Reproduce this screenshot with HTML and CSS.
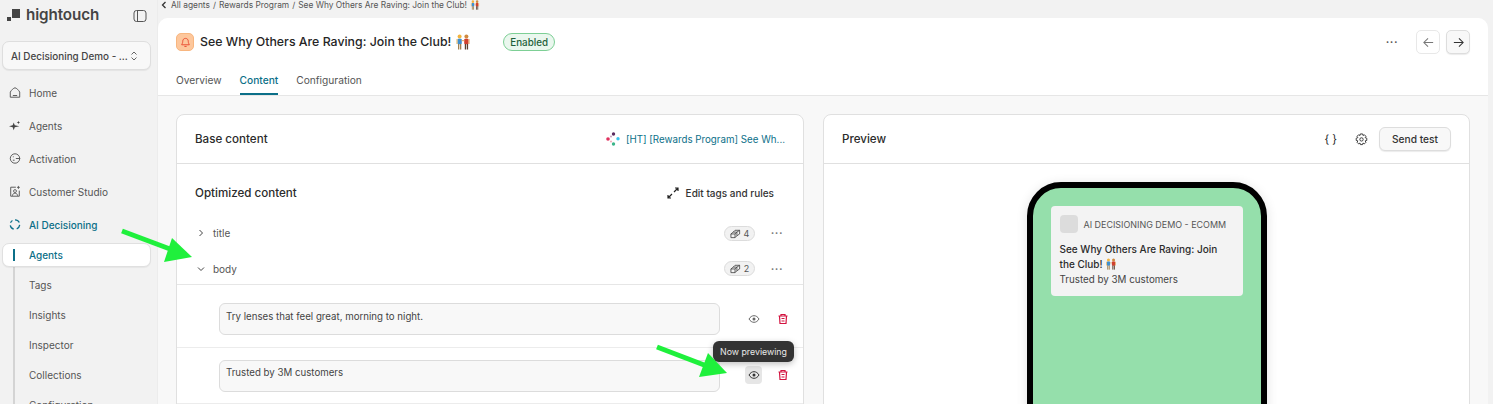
FILE: index.html
```html
<!DOCTYPE html>
<html lang="en">
<head>
<meta charset="utf-8">
<title>Hightouch</title>
<link rel="stylesheet" href="styles.css">
</head>
<body>
<svg class="defs" width="0" height="0" aria-hidden="true">
  <symbol id="couple" viewBox="0 0 16 16">
    <circle cx="4.600" cy="2.600" r="2" fill="#f2b33d"/>
    <rect x="2.400" y="4.800" width="4.400" height="5.400" rx="1" fill="#3f8fd0"/>
    <rect x="1.400" y="5" width="1.100" height="5" fill="#f0c070"/>
    <rect x="3" y="10" width="1.300" height="5.500" fill="#a08050"/>
    <rect x="5" y="10" width="1.300" height="5.500" fill="#a08050"/>
    <circle cx="11.400" cy="2.600" r="2" fill="#d08a3e"/>
    <rect x="9.200" y="4.800" width="4.400" height="5.400" rx="1" fill="#d0402e"/>
    <rect x="13.500" y="5" width="1.100" height="5" fill="#e8b070"/>
    <rect x="9.800" y="10" width="1.300" height="5.500" fill="#5b4030"/>
    <rect x="11.800" y="10" width="1.300" height="5.500" fill="#5b4030"/>
    <rect x="6.800" y="6" width="2.400" height="1.200" fill="#e8b070"/>
  </symbol>
  <symbol id="eye" viewBox="0 0 12 12">
    <path d="M1 6c1.300-2.200 3-3.300 5-3.300S9.700 3.800 11 6c-1.300 2.200-3 3.300-5 3.300S2.300 8.200 1 6z" fill="none" stroke="currentColor"/>
    <circle cx="6" cy="6" r="1.500" fill="currentColor"/>
  </symbol>
  <symbol id="trash" viewBox="0 0 12 12">
    <path d="M1.500 3h9M4 3V1.500h4V3M2.500 3l.5 7.500h6l.5-7.500M4.500 5.500h3M4.500 8h3" fill="none" stroke="#d3123f" stroke-width="1.200"/>
  </symbol>
  <symbol id="tags" viewBox="0 0 12 12">
    <path d="M1 6.500L3.500 4.500H7.500V8.500L5.500 10.500H1zM1 6.500H5.500V10.500M5.500 6.500L7.500 4.500" fill="none" stroke="#444" stroke-width=".9"/>
    <path d="M3.500 4.500L5.500 2.500H10.500V6.500L7.500 8.500M7.500 4.500L10.500 2.500" fill="none" stroke="#444" stroke-width=".9"/>
  </symbol>
</svg>

<div class="app">
  <aside class="sidebar">
    <div class="brand">
      <span class="brand-left">
        <svg class="brand-mark" viewBox="0 0 14 14"><rect x="5" y="1" width="8" height="9" fill="#444"/><rect x="0" y="9" width="4" height="4" fill="#444"/></svg>
        <span class="brand-name">hightouch</span>
      </span>
      <svg class="panel-toggle" viewBox="0 0 14 14"><rect x="1" y="1.500" width="12" height="11" rx="2.500" fill="none" stroke="#555"/><path d="M4.500 1.500v11" stroke="#555"/></svg>
    </div>
    <div class="workspace">
      <span class="workspace-name">AI Decisioning Demo - ...</span>
      <svg class="updown" viewBox="0 0 8 12"><path d="M1.500 4.500L4 2l2.500 2.500M1.500 7.500L4 10l2.500-2.500" fill="none" stroke="#666"/></svg>
    </div>
    <nav class="nav">
      <a class="nav-item"><svg class="nav-icon" viewBox="0 0 14 14"><path d="M1.500 6.500C3 4 5 2 7 1.500 9 2 11 4 12.500 6.500v6h-11zM4.500 10.500h5" fill="none" stroke="#555" stroke-width="1.100"/></svg>Home</a>
      <a class="nav-item"><svg class="nav-icon" viewBox="0 0 14 14"><path d="M5.500 3.500l1.200 3.300L12 7.800 6.700 9 5.500 12.500 4.300 9 0 7.800l4.300-1z" fill="#444"/><path d="M11 1.500l.5 1.500 1.500.5-1.500.5-.5 1.500-.5-1.500L9 3.500l1.500-.5z" fill="#444"/></svg>Agents</a>
      <a class="nav-item"><svg class="nav-icon" viewBox="0 0 14 14"><circle cx="7" cy="7" r="5.500" fill="none" stroke="#555" stroke-width="1.100"/><path d="M4.500 5h1M4.500 9h2M8 7h5" stroke="#555" stroke-width="1.100"/></svg>Activation</a>
      <a class="nav-item"><svg class="nav-icon" viewBox="0 0 14 14"><path d="M8 2H2v10.500h10V6" fill="none" stroke="#555" stroke-width="1.100"/><circle cx="7" cy="6.500" r="1.700" fill="none" stroke="#555"/><path d="M4 12c0-2 1.500-3 3-3s3 1 3 3M11 .5v3.500M9.300 2.200h3.400" fill="none" stroke="#555"/></svg>Customer Studio</a>
      <a class="nav-item nav-active"><svg class="nav-icon" viewBox="0 0 14 14"><path d="M7 1.500a5.500 5.500 0 0 1 5 3.200M12.500 7.500A5.500 5.500 0 0 1 9 12M5.500 12.500A5.500 5.500 0 0 1 1.500 8M1.800 5A5.500 5.500 0 0 1 4 2.300" fill="none" stroke="#0b6f88" stroke-width="1.500"/></svg>AI Decisioning</a>
    </nav>
    <div class="subnav">
      <a class="sub-item sub-current"><span class="sub-bar"></span>Agents</a>
      <a class="sub-item">Tags</a>
      <a class="sub-item">Insights</a>
      <a class="sub-item">Inspector</a>
      <a class="sub-item">Collections</a>
      <a class="sub-item">Configuration</a>
    </div>
  </aside>

  <main class="main">
    <div class="crumbs">
      <svg class="crumb-back" viewBox="0 0 6 8"><path d="M4.500 1L1.500 4l3 3" fill="none" stroke="#333" stroke-width="1.300"/></svg>
      <span>All agents</span><span>/</span><span>Rewards Program</span><span>/</span><span>See Why Others Are Raving: Join the Club!</span>
      <svg class="emoji-sm"><use href="#couple"/></svg>
    </div>
    <div class="workarea">
      <header class="head">
        <div class="head-top">
          <span class="bell"><svg viewBox="0 0 12 12"><path d="M6 1.500c-2 0-3 1.500-3 3.200 0 2-1 3-1.200 3.800h8.400C10 7.700 9 6.700 9 4.700 9 3 8 1.500 6 1.500zM4.800 10.300h2.400" fill="none" stroke="#e8452c" stroke-width="1"/></svg></span>
          <h1 class="title">See Why Others Are Raving: Join the Club!</h1>
          <svg class="emoji-lg"><use href="#couple"/></svg>
          <span class="badge">Enabled</span>
          <span class="spacer"></span>
          <span class="dots dots-dark">•••</span>
          <span class="arrow-btn"><svg viewBox="0 0 14 14"><path d="M12 7H2M6.500 2.500L2 7l4.500 4.500" fill="none" stroke="#777" stroke-width="1.100"/></svg></span>
          <span class="arrow-btn arrow-btn-on"><svg viewBox="0 0 14 14"><path d="M2 7h10M7.500 2.500L12 7l-4.500 4.500" fill="none" stroke="#333" stroke-width="1.100"/></svg></span>
        </div>
        <div class="tabs">
          <a class="tab">Overview</a>
          <a class="tab tab-on">Content</a>
          <a class="tab">Configuration</a>
        </div>
      </header>
      <div class="columns">
        <section class="card">
          <div class="card-head">
            <span class="card-title">Base content</span>
            <span class="spacer"></span>
            <svg class="source-logo" viewBox="0 0 14 14"><circle cx="7.500" cy="2" r="1.700" fill="#5b2a5e"/><circle cx="2" cy="7" r="1.800" fill="#e0315e"/><circle cx="12" cy="6.800" r="1.700" fill="#3bc4ee"/><circle cx="7.500" cy="12" r="1.700" fill="#3bb58a"/><circle cx="5" cy="4.500" r="1" fill="#c9a0c0"/><circle cx="5" cy="9.500" r="1" fill="#f0a8b8"/></svg>
            <span class="source-link">[HT] [Rewards Program] See Wh...</span>
          </div>
          <div class="opt-head">
            <span class="card-title">Optimized content</span>
            <span class="spacer"></span>
            <svg class="expand" viewBox="0 0 12 12"><path d="M7 5l4-4M8 1h3v3M5 7l-4 4M1 8v3h3" fill="none" stroke="#222" stroke-width="1.200"/></svg>
            <span class="edit-link">Edit tags and rules</span>
          </div>
          <div class="field field-title">
            <svg class="chev" viewBox="0 0 8 8"><path d="M2.500 1l3 3-3 3" fill="none" stroke="#444"/></svg>
            <span class="field-name">title</span>
            <span class="spacer"></span>
            <span class="tag-pill"><svg class="tag-icon"><use href="#tags"/></svg>4</span>
            <span class="dots">•••</span>
          </div>
          <div class="field field-body">
            <svg class="chev" viewBox="0 0 8 8"><path d="M1 2.500l3 3 3-3" fill="none" stroke="#444"/></svg>
            <span class="field-name">body</span>
            <span class="spacer"></span>
            <span class="tag-pill"><svg class="tag-icon"><use href="#tags"/></svg>2</span>
            <span class="dots">•••</span>
          </div>
          <div class="variant variant-first">
            <div class="variant-box">Try lenses that feel great, morning to night.</div>
            <span class="icon-btn"><svg class="icon-12"><use href="#eye"/></svg></span>
            <span class="icon-btn"><svg class="icon-12"><use href="#trash"/></svg></span>
          </div>
          <div class="variant variant-second">
            <div class="variant-box">Trusted by 3M customers</div>
            <span class="icon-btn icon-btn-on"><svg class="icon-12"><use href="#eye"/></svg>
              <span class="tooltip">Now previewing</span>
            </span>
            <span class="icon-btn"><svg class="icon-12"><use href="#trash"/></svg></span>
          </div>
        </section>
        <section class="card card-preview">
          <div class="card-head">
            <span class="card-title">Preview</span>
            <span class="spacer"></span>
            <span class="braces">{ }</span>
            <svg class="gear" viewBox="0 0 14 14"><path d="M5.800 1h2.400l.4 1.700 1.500-.8 1.700 1.700-.9 1.400 1.800.6v2.400l-1.800.5.9 1.500-1.700 1.700-1.500-.9-.4 1.700H5.800l-.4-1.700-1.500.9-1.700-1.700.9-1.500L1.300 8V5.600l1.800-.6-.9-1.400 1.700-1.700 1.500.8z" fill="none" stroke="#333"/><circle cx="7" cy="6.900" r="1.800" fill="none" stroke="#333"/></svg>
            <span class="send-btn">Send test</span>
          </div>
          <div class="stage">
            <div class="phone">
              <div class="notice">
                <div class="notice-app"><span class="app-icon"></span>AI DECISIONING DEMO - ECOMM</div>
                <div class="notice-title">See Why Others Are Raving: Join the Club! <svg class="emoji-notice"><use href="#couple"/></svg></div>
                <div class="notice-body">Trusted by 3M customers</div>
              </div>
            </div>
          </div>
        </section>
      </div>
    </div>
  </main>
</div>

<svg class="annotations" viewBox="0 0 1493 404" aria-hidden="true">
  <path d="M122 231L178 252" stroke="#1ff03c" stroke-width="5"/>
  <path d="M192 257L172 238L164 262z" fill="#1ff03c"/>
  <path d="M657 347L712 368" stroke="#1ff03c" stroke-width="5"/>
  <path d="M727 373L708 353L699 377z" fill="#1ff03c"/>
</svg>
</body>
</html>
```
FILE: styles.css
```css
* { box-sizing: border-box; }
html, body { margin: 0; height: 404px; overflow: hidden; }
body { font-family: Inter, "Liberation Sans", sans-serif; font-size: 10px; color: #444; background: #f2f2f2; position: relative; }
a { color: inherit; text-decoration: none; }
.defs { position: absolute; }
.spacer { flex: 1; }
.app { display: flex; height: 404px; overflow: hidden; }

/* sidebar */
.sidebar { width: 158px; flex: none; padding: 0 6px 0 2px; background: #f2f2f2; border-right: 1px solid #ececec; }
.brand { height: 41px; display: flex; align-items: flex-start; justify-content: space-between; padding: 7px 4px 0 5px; }
.brand-left { display: flex; align-items: center; gap: 5px; }
.brand-mark { width: 14px; height: 14px; }
.brand-name { font-size: 15.200px; font-weight: 600; color: #444; line-height: 15px; letter-spacing: -.1px; }
.panel-toggle { width: 14px; height: 14px; margin-top: 2px; }
.workspace { height: 29px; display: flex; align-items: center; justify-content: space-between; padding: 0 12px 0 8px; background: #f8f8f8; border: 1px solid #dedede; border-radius: 7px; box-shadow: 0 1px 1px rgba(0,0,0,.06); font-weight: 500; font-size: 9.900px; color: #444; }
.workspace-name { white-space: nowrap; }
.updown { width: 8px; height: 12px; }
.nav { padding-top: 6px; }
.nav-item { height: 33px; display: flex; align-items: center; gap: 8px; padding-left: 7px; color: #555; }
.nav-icon { width: 12px; height: 13px; flex: none; }
.nav-active { color: #0b6f88; font-weight: 500; }
.subnav { position: relative; margin-top: 2px; }
.subnav::before { content: ""; position: absolute; left: 11px; top: 10px; bottom: -40px; width: 2px; background: #d4d4d4; }
.sub-item { height: 30px; display: flex; align-items: center; padding-left: 27px; color: #555; position: relative; }
.sub-current { height: 24px; margin-bottom: 3px; background: #fff; border: 1px solid #e0e0e0; border-radius: 7px; color: #0b6f88; font-weight: 500; padding-left: 26px; box-shadow: 0 1px 1px rgba(0,0,0,.05); z-index: 1; }
.sub-bar { position: absolute; left: 10px; top: 5px; width: 2px; height: 12px; background: #0b6f88; }

/* main */
.main { flex: 1; min-width: 0; background: #f2f2f2; display: flex; flex-direction: column; }
.crumbs { height: 18px; flex: none; padding: 0 0 8px 3px; display: flex; align-items: center; gap: 3px; font-size: 8.400px; color: #555; }
.crumb-back { width: 6px; height: 8px; margin-right: 1px; }
.emoji-sm { width: 10px; height: 10px; }
.workarea { flex: 1; margin-right: 5px; background: #f8f8f8; border-radius: 10px 10px 0 0; display: flex; flex-direction: column; min-height: 0; }
.head { height: 78px; flex: none; background: #fff; border-bottom: 1px solid #e6e6e6; padding: 0 18px; border-radius: 10px 10px 0 0; }
.head-top { height: 48px; display: flex; align-items: center; }
.bell { width: 18px; height: 18px; border-radius: 5px; background: #fdc79c; border: 1px solid #f8b67f; display: flex; align-items: center; justify-content: center; margin-right: 6px; }
.bell svg { width: 11px; height: 11px; }
.title { margin: 0; font-size: 12.350px; font-weight: 500; color: #252525; line-height: 18px; }
.emoji-lg { width: 16px; height: 16px; margin-left: 4px; }
.badge { margin-left: 32px; height: 18px; padding: 0 6px; display: flex; align-items: center; border: 1px solid #7dcf95; background: #eaf7ee; border-radius: 9px; font-size: 9.800px; font-weight: 500; color: #1f5f3b; }
.dots { font-size: 5.500px; letter-spacing: 1px; color: #777; width: 16px; }
.dots-dark { color: #555; margin-right: 8px; }
.arrow-btn { width: 24px; height: 24px; display: flex; align-items: center; justify-content: center; border: 1px solid #e8e8e8; border-radius: 5px; margin-left: 6px; background: #fff; }
.arrow-btn svg { width: 13px; height: 13px; }
.arrow-btn-on { background: #f8f8f8; border-color: #ddd; box-shadow: 0 1px 1px rgba(0,0,0,.08); }
.tabs { display: flex; gap: 18px; height: 29px; }
.tab { height: 29px; padding-top: 8px; font-size: 10.200px; color: #555; }
.tab-on { color: #0b6f88; font-weight: 500; border-bottom: 2px solid #0b6f88; }
.columns { flex: 1; display: flex; gap: 19px; padding: 18px 18px 0; min-height: 0; overflow: hidden; }
.card { width: 628px; flex: none; height: 320px; background: #fff; border: 1px solid #e0e0e0; border-radius: 8px 8px 0 0; }
.card-preview { flex: 1; width: auto; }
.card-head { height: 49px; display: flex; align-items: center; padding: 0 18px; border-bottom: 1px solid #e0e0e0; }
.card-title { font-size: 11.600px; font-weight: 500; color: #2b2b2b; }
.source-logo { width: 14px; height: 14px; margin-right: 6px; }
.source-link { color: #0b6f88; font-size: 9.750px; }
.opt-head { height: 58px; display: flex; align-items: center; padding: 0 29px 0 18px; }
.expand { width: 12px; height: 12px; margin-right: 7px; }
.edit-link { font-weight: 500; color: #333; }
.field { height: 36px; display: flex; align-items: center; padding: 0 16px 0 20px; }
.field-title { margin-top: -7px; }
.field-body { height: 34px; padding-top: 2px; border-bottom: 1px solid #e6e6e6; }
.chev { width: 8px; height: 8px; margin-right: 8px; }
.field-name { color: #555; }
.tag-pill { height: 15px; width: 31px; border: 1px solid #dcdcdc; background: #f2f2f2; border-radius: 8px; display: flex; align-items: center; justify-content: center; gap: 3px; font-size: 9px; color: #555; margin-right: 16px; }
.tag-icon { width: 11px; height: 11px; }
.variant { height: 56px; display: flex; align-items: center; padding-left: 42px; border-bottom: 1px solid #ececec; }
.variant-first { height: 63px; padding-top: 6px; }
.variant-box { width: 501px; height: 32px; flex: none; margin-right: 25px; padding: 7px 6px; background: #f8f8f8; border: 1px solid #dcdcdc; border-radius: 6px; font-size: 9.700px; color: #444; }
.variant-second .variant-box { padding-top: 6px; }
.variant-second .icon-btn { margin-top: -2px; }
.icon-btn { width: 18px; height: 18px; display: flex; align-items: center; justify-content: center; border-radius: 4px; color: #666; margin-right: 12px; position: relative; }
.icon-btn-on { background: #e6e6e6; color: #333; }
.icon-12 { width: 12px; height: 12px; }
.tooltip { position: absolute; left: -32px; top: -25px; width: 81px; height: 21px; display: flex; align-items: center; justify-content: center; background: #333; color: #e8e8e8; border-radius: 6px; font-size: 8.800px; box-shadow: 0 2px 6px rgba(0,0,0,.25); white-space: nowrap; }

/* preview */
.braces { font-size: 11px; color: #222; margin-right: 18px; }
.gear { width: 13px; height: 13px; margin-right: 11px; }
.send-btn { height: 24px; width: 72px; display: flex; align-items: center; justify-content: center; border: 1px solid #ddd; border-radius: 6px; background: #f8f8f8; font-size: 10.200px; font-weight: 500; color: #333; box-shadow: 0 1px 1px rgba(0,0,0,.08); }
.stage { display: flex; justify-content: center; padding-top: 18px; }
.phone { width: 240px; height: 300px; background: #95dfab; border: 6px solid #000; border-radius: 34px; padding: 18px; box-shadow: 0 2px 12px rgba(0,0,0,.12); }
.notice { height: 90px; width: 192px; background: #f3f3f3; border-radius: 4px; padding: 9px; }
.notice-app { display: flex; align-items: center; gap: 6px; font-size: 8.950px; color: #555; height: 18px; white-space: nowrap; }
.app-icon { width: 18px; height: 18px; background: #dcdcdc; border-radius: 4px; flex: none; }
.notice-title { margin-top: 9px; font-size: 10px; font-weight: 500; line-height: 15px; color: #2b2b2b; }
.emoji-notice { width: 12px; height: 12px; vertical-align: -2px; }
.notice-body { font-size: 9.800px; line-height: 15px; color: #444; }
.annotations { position: absolute; left: 0; top: 0; width: 1493px; height: 404px; pointer-events: none; }
```
